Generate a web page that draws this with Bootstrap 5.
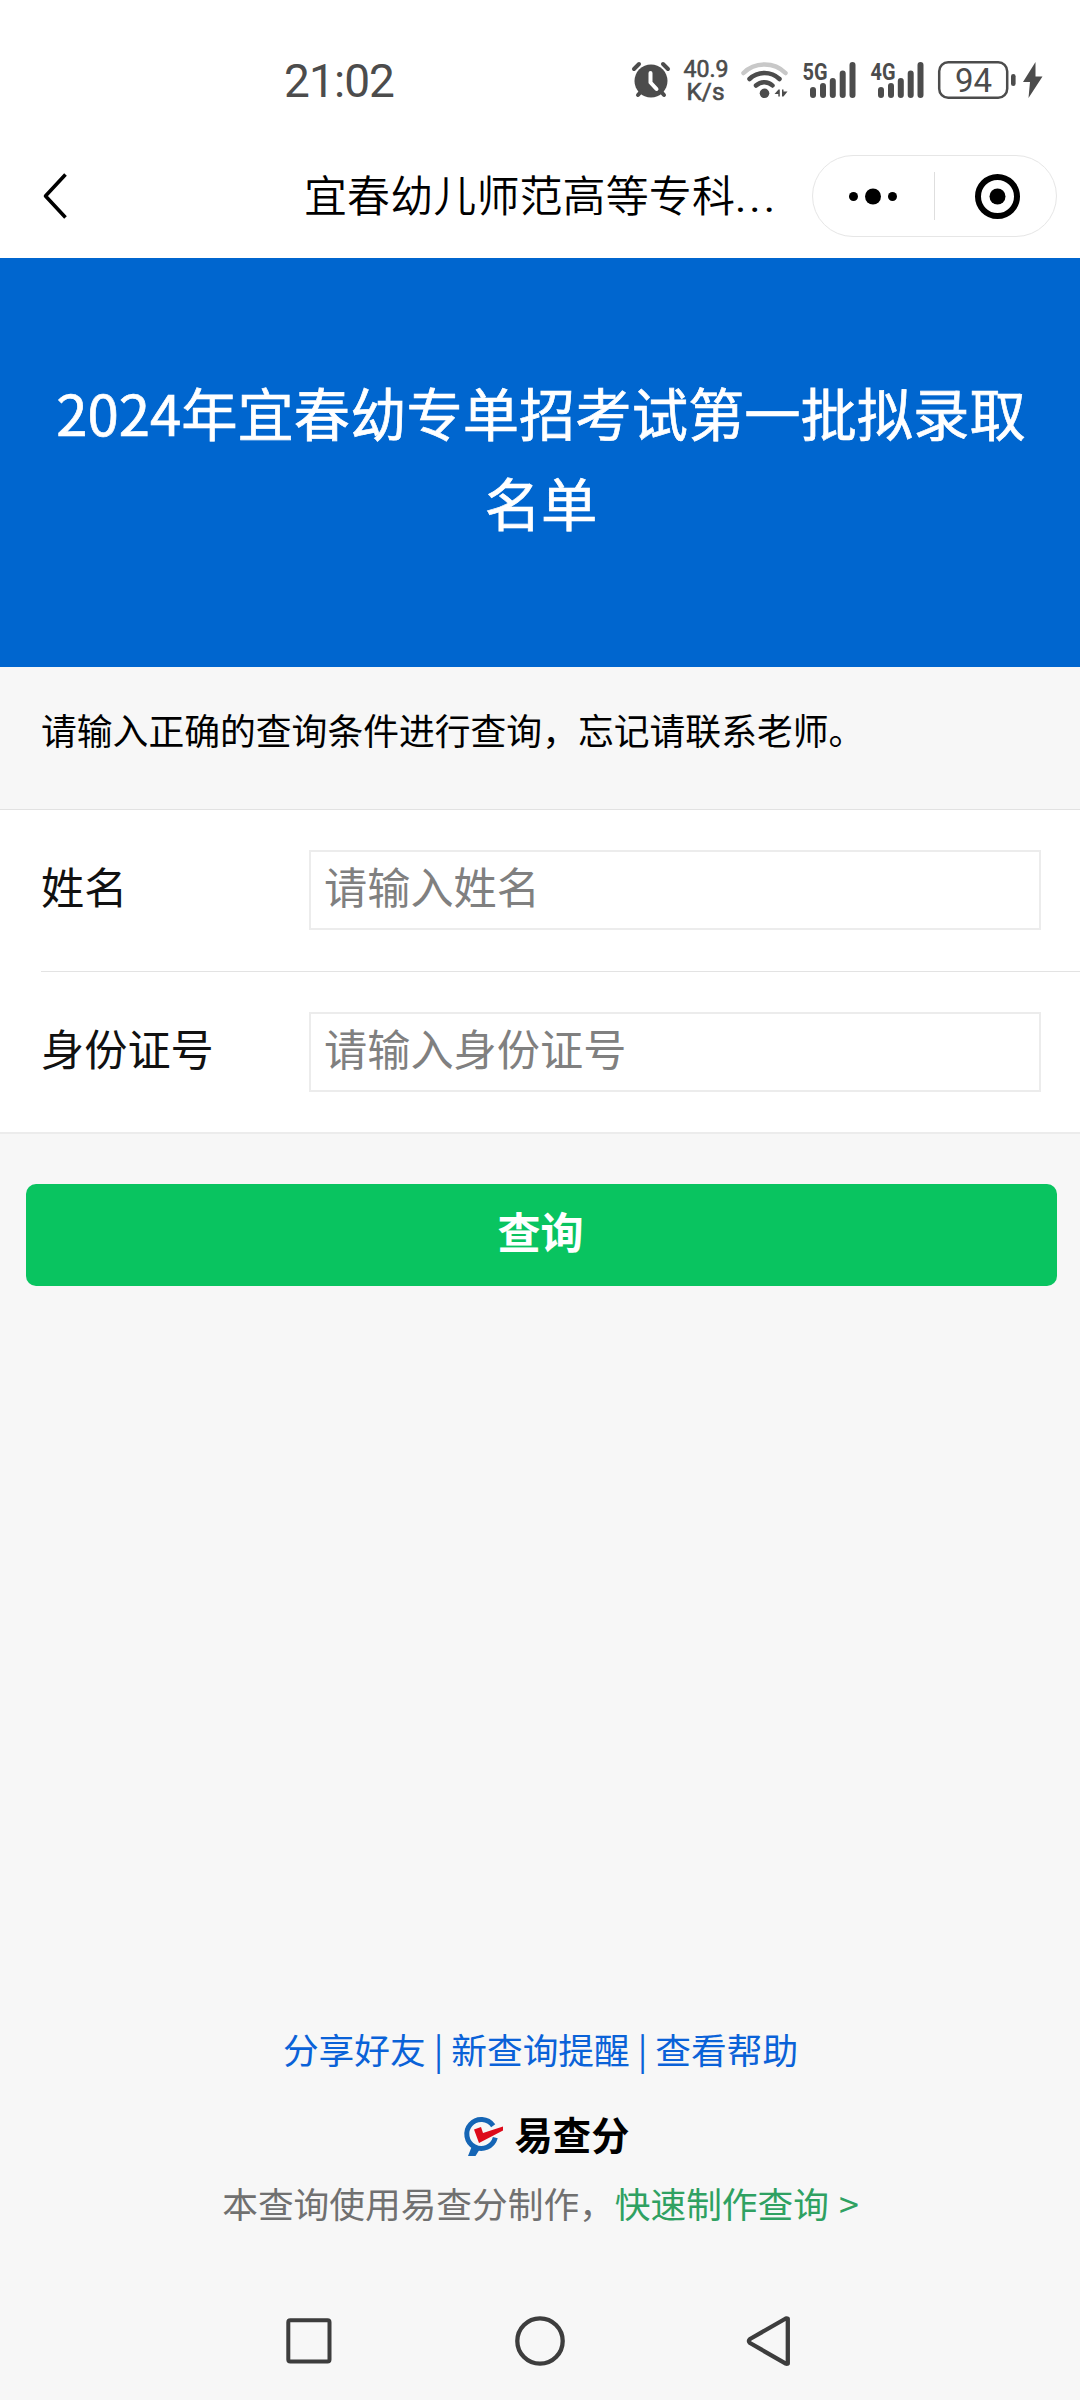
<!DOCTYPE html>
<html lang="zh-CN">
<head>
<meta charset="utf-8">
<meta name="viewport" content="width=device-width, initial-scale=1">
<title>2024年宜春幼专单招考试第一批拟录取名单</title>
<link href="https://cdn.jsdelivr.net/npm/bootstrap@5.3.0/dist/css/bootstrap.min.css" rel="stylesheet">
<style>
  body { width: 1080px; height: 2400px; background: #f7f7f7; color: #000; font-family: "Noto Sans CJK SC", sans-serif; overflow: hidden; }
  svg { display: block; flex: none; overflow: visible; }
  .status-bar { height: 135px; padding: 25px 34px 0 284px; color: #4c4c4c; font-family: Roboto, sans-serif; }
  .clock { font-size: 46px; line-height: 1; letter-spacing: -.9px; padding-top: 2px; }
  .title-bar { height: 123px; padding: 0 23px 2px 42px; }
  .page-name { font-size: 43px; line-height: 60px; font-weight: 350; margin-left: 235px; letter-spacing: .1px; margin-top: -1px; }
  .page-name span { font-family: Roboto, sans-serif; letter-spacing: 3px; font-weight: 400; }
  .capsule { width: 245px; height: 82px; border: 1px solid #e6e6e6; }
  .hero { height: 409px; background: #0066cf; padding: 109px 28px 0 30px; }
  .hero h1 { font-size: 56.3px; line-height: 90px; font-weight: 400; -webkit-text-stroke: .7px #fff; }
  .hint { height: 142px; padding: 39px 41px 0; font-size: 35.8px; line-height: 46px; }
  .form-block { border-top: 1px solid #e2e2e2; border-bottom: 2px solid #ececec; }
  .field { margin-left: 41px; padding: 0 39px 1px 0; height: 161px; }
  .field + .field { border-top: 1px solid #e3e3e3; padding-bottom: 0; }
  .field label { width: 268px; font-size: 43.2px; line-height: 60px; color: #111; margin-top: -11px; }
  .field .form-control { height: 80px; border: 2px solid #ececec; padding: 0 13px 11px; font-size: 43.2px; line-height: 60px; }
  .field .form-control::placeholder { color: #808080; opacity: 1; }
  .query-btn { margin: 50px 23px 0 26px; height: 102px; border-radius: 10px; background: #09c460; font-size: 43px; line-height: 60px; padding: 0 2px 10px 0; }
  .foot { font-size: 35.7px; line-height: 50px; }
  .foot a { color: #0a62d8; }
  .share-line { margin-bottom: 43px; padding-left: 1px; }
  .brand-row { padding-left: 13px; }
  .brand-name { font-size: 38.3px; line-height: 46px; margin: -6px 0 0 11px; }
  .made-by { color: #707070; margin: 21px 0 6px; padding-left: 1px; }
  .foot .make-link { color: #2fa162; word-spacing: 2px; }
  .nav-keys { height: 118px; padding: 0 289px 0 286px; }
</style>
</head>
<body class="d-flex flex-column">
  <div class="bg-white">
    <div class="status-bar d-flex justify-content-between align-items-center">
      <span class="clock">21:02</span>
      <svg width="416" height="46" viewBox="630 57 416 46" fill="#4c4c4c" font-family="Roboto, sans-serif">
        <!-- alarm clock -->
        <circle cx="651" cy="81" r="16.5"/>
        <g stroke="#4c4c4c" stroke-width="4" stroke-linecap="round" fill="none">
          <path d="M634 69l5-5M668 69l-5-5M638 95l3.500-4M664 95l-3.500-4"/>
          <path d="M650.500 73v9.500l6 6.500" stroke="#fff" stroke-linejoin="round"/>
        </g>
        <g stroke="#4c4c4c" stroke-width=".6">
          <text x="683.500" y="77" font-size="23" textLength="45" lengthAdjust="spacingAndGlyphs">40.9</text>
          <text x="686.500" y="99.500" font-size="23" textLength="38" lengthAdjust="spacingAndGlyphs">K/s</text>
        </g>
        <!-- wifi -->
        <g fill="none" stroke="#4c4c4c" stroke-width="4.500" stroke-linecap="round">
          <path d="M743.500 73c11-11.500 31-11.500 42 0" stroke="#c8c8c8"/>
          <path d="M749.500 79c8.500-8 21.500-8 30 0"/>
          <path d="M756 85.500c5-4.500 12-4.500 16.500 0"/>
        </g>
        <circle cx="764.500" cy="93.300" r="4.800"/>
        <path d="M774.500 94l4-4.500h1.300v7h-1.500v-2.500zM782 89.500h1.500v2h4l-4 5h-1.500z"/>
        <!-- network generation labels -->
        <g font-weight="700" font-size="24">
          <text x="802.500" y="79.800" textLength="25" lengthAdjust="spacingAndGlyphs">5G</text>
          <text x="870.500" y="79.800" textLength="25" lengthAdjust="spacingAndGlyphs">4G</text>
        </g>
        <g stroke="#4c4c4c" stroke-width="6" stroke-linecap="round">
          <path d="M813 90v5M823 86v9M832.800 81v14M842.700 73.500v21.500M852.500 65v30"/>
          <path d="M881 90v5M891 86v9M900.800 81v14M910.700 73.500v21.500M920.500 65v30"/>
        </g>
        <!-- battery -->
        <rect x="939.200" y="62.200" width="68" height="35.600" rx="9" fill="none" stroke="#4c4c4c" stroke-width="2.500"/>
        <text x="973.500" y="91.500" font-size="33" text-anchor="middle">94</text>
        <rect x="1011" y="74" width="4.600" height="12" rx="2.300"/>
        <path d="M1035.500 62l-12.500 20h7l-1.500 16 14-21.500h-7z"/>
      </svg>
    </div>
    <div class="title-bar d-flex align-items-center">
      <svg width="27" height="46" viewBox="42 173 27 46" fill="none" stroke="#000" stroke-width="3.600" stroke-linejoin="round"><path d="M65.500 174.500L45.500 196l20 21.500"/></svg>
      <div class="page-name text-nowrap">宜春幼儿师范高等专科<span>...</span></div>
      <div class="capsule rounded-pill ms-auto">
        <svg width="243" height="80" viewBox="813 156 243 80">
          <circle cx="853.500" cy="196.500" r="4.500"/><circle cx="873" cy="196.500" r="8"/><circle cx="892.500" cy="196.500" r="4.500"/>
          <path d="M934.500 172v48" stroke="#dedede"/>
          <circle cx="997.500" cy="196.500" r="19.500" fill="none" stroke="#000" stroke-width="6"/><circle cx="997.500" cy="196.500" r="8"/>
        </svg>
      </div>
    </div>
  </div>
  <header class="hero text-white text-center"><h1 class="m-0">2024年宜春幼专单招考试第一批拟录取<br>名单</h1></header>
  <main>
    <p class="hint m-0">请输入正确的查询条件进行查询，忘记请联系老师。</p>
    <div class="form-block bg-white">
      <div class="field d-flex align-items-center"><label for="name" class="flex-shrink-0">姓名</label><input id="name" class="form-control rounded-0" placeholder="请输入姓名"></div>
      <div class="field d-flex align-items-center"><label for="idno" class="flex-shrink-0">身份证号</label><input id="idno" class="form-control rounded-0" placeholder="请输入身份证号"></div>
    </div>
    <div class="d-grid"><button class="btn query-btn border-0 text-white fw-bold">查询</button></div>
  </main>
  <footer class="foot text-center mt-auto">
    <div class="share-line"><a href="#" class="text-decoration-none">分享好友 | 新查询提醒 | 查看帮助</a></div>
    <div class="brand-row d-flex justify-content-center align-items-center">
      <svg width="40" height="40" viewBox="465 2118 40 40">
        <path d="M494.200 2126.700A14.500 14.500 0 1 0 496.300 2138.700" fill="none" stroke="#1565b5" stroke-width="5"/>
        <path d="M473 2147l-4 10h7.500l5-8z" fill="#1565b5"/>
        <path d="M475 2130.500l7-2.500 2 6 20-6.500v4l-24 12.500z" fill="#dd0b1b"/>
      </svg>
      <span class="brand-name fw-bold">易查分</span>
    </div>
    <div class="made-by">本查询使用易查分制作，<a href="#" class="make-link text-decoration-none">快速制作查询 &gt;</a></div>
  </footer>
  <nav class="nav-keys d-flex justify-content-between mt-5 flex-shrink-0">
    <svg width="46" height="118" viewBox="286 2282 46 118" fill="none" stroke="#3d3d3d" stroke-width="4"><rect x="288.300" y="2320.300" width="41.200" height="41.200" rx="2"/></svg>
    <svg width="50" height="118" viewBox="514 2282 50 118" fill="none" stroke="#3d3d3d" stroke-width="4.300"><circle cx="540" cy="2341" r="22.700"/></svg>
    <svg width="45" height="118" viewBox="746 2282 45 118" fill="none" stroke="#3d3d3d" stroke-width="4.300" stroke-linejoin="round"><path d="M787.800 2318.800v44.800q-1 .5-2 0L750 2343q-2-2 0-4l35.800-20.500q1-.5 2 .3z"/></svg>
  </nav>
<script src="https://cdn.jsdelivr.net/npm/bootstrap@5.3.0/dist/js/bootstrap.bundle.min.js"></script>
</body>
</html>
